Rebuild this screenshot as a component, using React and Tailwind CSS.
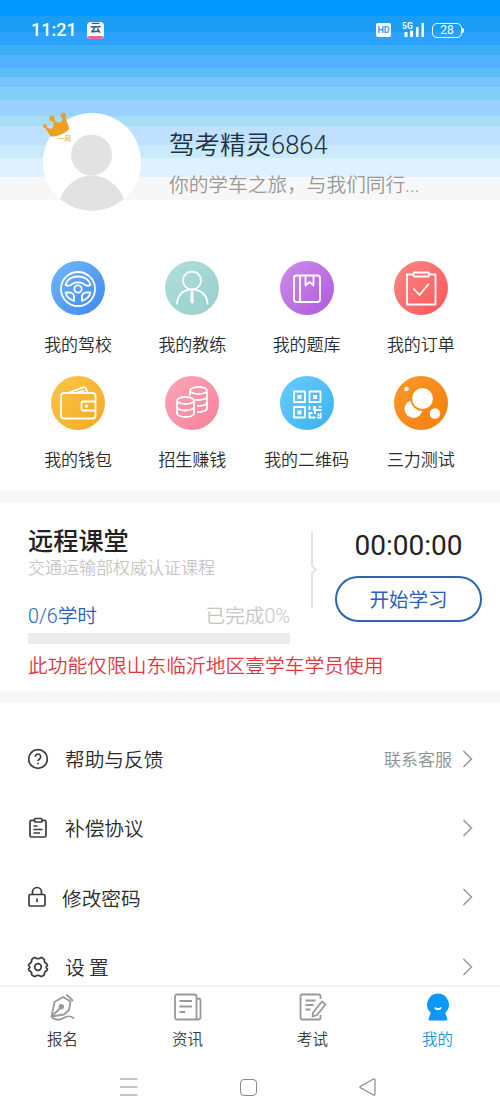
import React from "react";

const bands = [
  "h-[16px] bg-[#0098ff]",
  "h-[16px] bg-[#1b9df4]",
  "h-[13px] bg-[#2ba3ff]",
  "h-[10px] bg-[#3aaef3]",
  "h-[13px] bg-[#52b2ff]",
  "h-[9px] bg-[#5dbcf6]",
  "h-[10px] bg-[#7ac1ff]",
  "h-[13px] bg-[#80cff7]",
  "h-[16px] bg-[#99d1ff]",
  "h-[10px] bg-[#a5ddf6]",
  "h-[19px] bg-[#bfe1ff]",
  "h-[13px] bg-[#c9eaf8]",
  "h-[19px] bg-[#dff1ff]",
  "h-[23px] bg-[#f7f7f7]",
];

const WheelIcon = () => (
  <>
    <circle cx="27" cy="28" r="17" />
    <circle cx="27" cy="28" r="3.700" />
    <path d="M14.500 23.500C16.500 18 21.500 15.500 27 15.500s10.500 2.500 12.500 8c-1.500 1.500-3.500 1.500-5.500.5-3-3.500-11-3.500-14 0-2 1-4 1-5.500-.5z" />
    <path d="M14.500 31.500h5c2 .5 3.500 2 3.500 4v4.500c-4.500-1.500-7.500-4.500-8.500-8.500zM39.500 31.500h-5c-2 .5-3.500 2-3.500 4v4.500c4.500-1.500 7.500-4.500 8.500-8.500z" />
  </>
);

const CoachIcon = () => (
  <>
    <circle cx="27" cy="19.500" r="9" />
    <path d="M12 43.500C12 34 18 28.700 27 28.700S42.500 34 42.500 43.500" />
    <path d="M26 30h2.200l.8 10-1.900 3.500L25.200 40z" fill="white" stroke="none" />
  </>
);

const BookIcon = () => (
  <>
    <rect x="14" y="14.500" width="26" height="26.500" rx="2.500" />
    <path d="M20 14.500V41M25.500 14.500v10l4-3.500 4 3.500v-10" />
  </>
);

const OrderIcon = () => (
  <>
    <path d="M19 13.500h-6v30h28.500v-30h-6" />
    <rect x="19.500" y="11.500" width="15.500" height="4" rx="1" />
    <path d="M19.500 27.500l6 6.500L35 22.500" />
  </>
);

const WalletIcon = () => (
  <>
    <rect x="10" y="17" width="34.500" height="25.500" rx="3" />
    <path d="M18 16.500L32 11.300c1.500-.5 2.300.3 3 1.500l1.500 3.500M25.500 16.500l8-2" />
    <path d="M44.500 25.500H32a1.500 1.500 0 0 0-1.500 1.500v6a1.500 1.500 0 0 0 1.500 1.500h12.500" />
    <circle cx="35.500" cy="30" r="1.700" fill="white" stroke="none" />
  </>
);

const CoinsIcon = () => (
  <>
    <ellipse cx="20.500" cy="24.500" rx="8.500" ry="3.500" />
    <path d="M12 24.500v13c0 2 4 3.500 8.500 3.500s8.500-1.500 8.500-3.500v-13M12 31c0 2 4 3.500 8.500 3.500S29 33 29 31" />
    <ellipse cx="33.500" cy="14.500" rx="8.500" ry="3.500" />
    <path d="M25 14.500v5M42 14.500v18c0 2-4 3.500-10 3.500M42 20.500c0 2-4 3.500-8.500 3.500-1.500 0-2.500-.1-3.500-.4M42 26.500c0 2-4 3.500-10 3.500" />
  </>
);

const QrIcon = () => (
  <>
    <path d="M14 15.500h11v10.500H14zM29.500 15.500h11v10.500h-11zM14 31h11v10.500H14z" />
    <path
      d="M17.500 19h4v4h-4zM33 19h4v4h-4zM17.500 34.500h4v4h-4zM28.500 30h2v4h-2zM33 30h3v3h5.500v2H36v3h-2v-3h-1zM38.500 30h3v1.500h-3zM28.500 36h4v2h-2v2.500h5v2h-7zM37.500 37.500h2v3h-2zM40 36.500h1.500v6H37v-1.500h3z"
      fill="white"
      stroke="none"
    />
  </>
);

const BubblesIcon = () => (
  <g fill="white" stroke="none">
    <circle cx="12.500" cy="13" r="2.300" />
    <circle cx="19.500" cy="33" r="9" />
    <circle cx="28.500" cy="22.500" r="12.300" fill="#f98a12" />
    <circle cx="28.500" cy="22.500" r="10.500" />
    <circle cx="41" cy="37.500" r="5.300" />
  </g>
);

const shortcuts = [
  { label: "我的驾校", bg: "bg-linear-to-br from-[#71b8fb] to-[#4186ee]", Icon: WheelIcon },
  { label: "我的教练", bg: "bg-linear-to-br from-[#b1dedb] to-[#96cfcd]", Icon: CoachIcon },
  { label: "我的题库", bg: "bg-linear-to-br from-[#d08be9] to-[#ad59dc]", Icon: BookIcon },
  { label: "我的订单", bg: "bg-linear-to-br from-[#fc8583] to-[#fa5459]", Icon: OrderIcon },
  { label: "我的钱包", bg: "bg-linear-to-br from-[#fcc649] to-[#f1a91f]", Icon: WalletIcon },
  { label: "招生赚钱", bg: "bg-linear-to-br from-[#fba6b7] to-[#f68099]", Icon: CoinsIcon },
  { label: "我的二维码", bg: "bg-linear-to-br from-[#6acbfc] to-[#36b2f2]", Icon: QrIcon },
  { label: "三力测试", bg: "bg-linear-to-br from-[#fb982b] to-[#f57e04]", Icon: BubblesIcon },
];

const HelpIcon = () => (
  <>
    <circle cx="11" cy="11" r="9.300" />
    <path d="M8.300 8.800a2.700 2.700 0 1 1 4.300 2.100c-1 .8-1.600 1-1.600 2.200M11 14.800v1.500" />
  </>
);

const AgreementIcon = () => (
  <>
    <path d="M7 3.300H4.500A1.500 1.500 0 0 0 3 4.800v13.700A1.500 1.500 0 0 0 4.500 20h13a1.500 1.500 0 0 0 1.500-1.500V4.800a1.500 1.500 0 0 0-1.500-1.500H15" />
    <rect x="7.500" y="1.500" width="7.500" height="3.500" rx="1" />
    <path d="M6.500 9h4M6.500 12.500h9M6.500 16H13" />
  </>
);

const LockIcon = () => (
  <>
    <rect x="2" y="8.500" width="16" height="11.500" rx="1.500" />
    <path d="M5.500 8.500V6a4.500 4.500 0 0 1 9 0v2.500M10 12.500v3.500" />
  </>
);

const GearIcon = () => (
  <>
    <path d="M6.900 1.700h1.600c.8 1.300 4.200 1.300 5 0h1.600l2.200 1.900c-.3 2.400.7 3.700 2.700 4.400l.5 1.500c-1.800 1.200-1.800 2.300 0 3.500l-.5 1.500c-2 .7-3 2-2.700 4.400l-2.200 1.400h-1.600c-.8-1.300-4.200-1.300-5 0H6.900l-2.200-1.400c.3-2.400-.7-3.700-2.700-4.400L1.500 13c1.800-1.200 1.800-2.300 0-3.500L2 8c2-.7 3-2 2.700-4.400z" />
    <circle cx="11" cy="11" r="3.300" />
  </>
);

const menu = [
  { label: "帮助与反馈", extra: "联系客服", Icon: HelpIcon, gap: "ml-4" },
  { label: "补偿协议", Icon: AgreementIcon, gap: "ml-4" },
  { label: "修改密码", Icon: LockIcon, gap: "ml-[13px]" },
  { label: "设 置", Icon: GearIcon, gap: "ml-4" },
];

const PenIcon = () => (
  <>
    <path d="M2.500 23.500L5.500 9l8.500-5 7.500 4.500-1.500 8.500-5 4.500z" />
    <path d="M2.500 23.500l9-8.500M17.500 1.500l6.500 6.500M2.500 24c4 3.500 8 3.500 12 1s6.500-2.500 10.500.5" />
    <circle cx="12.300" cy="13.800" r="1.800" fill="currentColor" />
  </>
);

const NewsIcon = () => (
  <>
    <rect x="1" y="1.500" width="21.500" height="25" rx="2" />
    <path d="M22.500 5.500h1.500a2.500 2.500 0 0 1 2.500 2.500v16a2.500 2.500 0 0 1-2.500 2.500h-3M5.500 8H18M5.500 13.500H18M5.500 19H11" />
  </>
);

const ExamIcon = () => (
  <>
    <path d="M21.500 6V3A1.500 1.500 0 0 0 20 1.500H3A1.500 1.500 0 0 0 1.500 3v22A1.500 1.500 0 0 0 3 26.500h17a1.500 1.500 0 0 0 1.500-1.500v-3" />
    <path d="M6.500 7.500h10M6.500 12h8M6.500 16.500h5M14 19.500l9-11 3.500 3L18 22l-4.500 1.500z" />
  </>
);

const MineIcon = () => (
  <>
    <path
      d="M14 .5a11 11 0 0 0-7.500 18.900c.3 1.600-1.200 4-1.700 6.100-.3 1.300.2 2 1.300 2h15.800c1.100 0 1.600-.7 1.300-2-.5-2.100-2-4.500-1.700-6.100A11 11 0 0 0 14 .5z"
      fill="currentColor"
      stroke="none"
    />
    <path d="M10.800 14.500c1.500 2.300 4.900 2.300 6.400 0" stroke="white" />
  </>
);

const tabs = [
  { label: "报名", Icon: PenIcon },
  { label: "资讯", Icon: NewsIcon },
  { label: "考试", Icon: ExamIcon },
  { label: "我的", Icon: MineIcon, active: true },
];

// Digits are set in Roboto, Chinese text stays in the page font
const Num = ({ children }) => <span className="font-['Roboto',sans-serif]">{children}</span>;

function StatusBar() {
  return (
    <div className="flex h-[60px] items-center pl-[31px] pr-[36px] font-['Roboto','Noto_Sans_CJK_SC',sans-serif] text-white">
      <span className="w-[45px] text-[18px] leading-5 font-medium">11:21</span>
      <div className="ml-[11px] flex h-[17px] w-[17px] flex-col items-center overflow-hidden rounded-[4px] bg-white">
        <span className="h-[14px] text-[11px] leading-[14px] font-bold text-[#2b5ca8]">云</span>
        <span className="h-[3px] w-full rounded-t-full bg-[#e8668c]" />
      </div>
      <span className="ml-auto flex h-[14px] w-[15px] items-center justify-center rounded-[2px] bg-white text-[9px] leading-none font-bold text-[#329ff6]">
        HD
      </span>
      <svg className="ml-[10px]" width="24" height="18" viewBox="0 0 24 18" fill="white">
        <text x="1" y="8" fontSize="8.500" fontWeight="700">
          5G
        </text>
        <path d="M3.500 11h3v5h-3zM9 9.500h3V16H9zM15 6h2.500v10H15zM20.500 2H23v14h-2.500z" />
      </svg>
      <span className="ml-[7px] flex h-[15px] w-[30px] items-center justify-center rounded-[5px] border border-white text-[12px] leading-none font-normal">
        28
      </span>
      <span className="h-[5px] w-[2px] rounded-r bg-white" />
    </div>
  );
}

function Profile() {
  return (
    <div className="flex pt-[53px] pl-[43px]">
      <div className="relative h-[98px] w-[98px] shrink-0">
        <svg width="98" height="98" viewBox="0 0 98 98">
          <circle cx="49" cy="49" r="49" fill="white" />
          <circle cx="48.500" cy="42" r="20.500" fill="#e2e2e2" />
          <path d="M17 86c5-13 17-23.500 31.500-23.500S76 73 81 86a49 49 0 0 1-64 0z" fill="#e2e2e2" />
        </svg>
        <svg className="absolute -top-px -left-px" width="32" height="30" viewBox="0 0 32 30">
          <path
            d="M9 23.500L3 14c2.500 3.500 6 4.500 8 2.500 2-2.200 1.500-6-.5-9.500 3 4 6 5.500 8.500 4s3-4.500 2.500-8.500L26.500 16c-1 3.500-12.500 8.500-17.500 7.500z"
            fill="#eda01f"
            stroke="#eda01f"
            strokeWidth="1.500"
            strokeLinejoin="round"
          />
          <g fill="#eda01f">
            <circle cx="3" cy="14" r="2" />
            <circle cx="10" cy="6.500" r="2.700" />
            <circle cx="21.500" cy="3.500" r="2.700" />
          </g>
          <text x="16" y="28.500" fontSize="6.500" fontWeight="400" fill="#eda01f">
            一网
          </text>
        </svg>
      </div>
      <div className="ml-[28px] pt-[14px]">
        <div className="h-8 text-[25.500px] leading-8 text-[#222f40]">
          驾考精灵<Num>6864</Num>
        </div>
        <div className="mt-[11px] text-[19.700px] leading-7 text-[#999]">
          你的学车之旅，与我们同行<Num>...</Num>
        </div>
      </div>
    </div>
  );
}

function Classroom() {
  return (
    <section className="h-[188px] bg-white pl-[28px]">
      <div className="flex">
        <div className="w-[262px] pt-[20px]">
          <h2 className="text-[25.200px] leading-8 font-medium text-[#222]">远程课堂</h2>
          <p className="text-[17px] leading-6 text-[#c6c6c6]">交通运输部权威认证课程</p>
          <div className="mt-[22px] flex h-7 justify-between text-[19.700px] leading-7">
            <span className="text-[#2c5fb8]">
              <Num>0/6</Num>学时
            </span>
            <span className="text-[#c6c6c6]">
              已完成<Num>0%</Num>
            </span>
          </div>
          <div className="mt-[4px] h-[11px] bg-[#ececec]" />
        </div>
        <svg className="mt-[29px] ml-[20px]" width="10" height="77" viewBox="0 0 10 77" fill="none" stroke="#dcdcdc" strokeWidth="1.500">
          <path d="M2 0v34l4 3.500-4 3.500v35" />
        </svg>
        <div className="ml-[15px] flex flex-col items-center pt-[22px]">
          <span className="h-9 text-[28px] leading-9 font-normal text-[#222]">
            <Num>00:00:00</Num>
          </span>
          <button className="mt-[15px] h-[46px] w-[147px] rounded-full border-2 border-[#2c66b0] text-[19.500px] leading-7 font-normal text-[#2c5fb8]">
            开始学习
          </button>
        </div>
      </div>
      <p className="mt-[7px] text-[19.750px] leading-7 text-[#e0393f]">此功能仅限山东临沂地区壹学车学员使用</p>
    </section>
  );
}

export default function App() {
  return (
    <div className="relative flex h-[1118px] w-[500px] flex-col overflow-hidden bg-white font-['Noto_Sans_CJK_SC',sans-serif] font-[350]">
      {/* Striped sky behind the header */}
      <div className="absolute inset-x-0 top-0">
        {bands.map((band) => (
          <div key={band} className={band} />
        ))}
      </div>

      <main className="relative h-[985px] shrink-0 overflow-hidden">
        <header className="h-[261px]">
          <StatusBar />
          <Profile />
        </header>

        {/* Shortcuts */}
        <section className="grid h-[229px] grid-cols-4 content-start gap-y-[22px] pr-[22px] pl-[21px]">
          {shortcuts.map(({ label, bg, Icon }) => (
            <div key={label} className="flex flex-col items-center">
              <div className={`h-[54px] w-[54px] rounded-full ${bg}`}>
                <svg width="54" height="54" viewBox="0 0 54 54" fill="none" stroke="white" strokeWidth="1.800" strokeLinejoin="round">
                  <Icon />
                </svg>
              </div>
              <span className="mt-[18px] text-[17px] leading-[21px] whitespace-nowrap text-[#2b2b2b]">{label}</span>
            </div>
          ))}
        </section>

        <div className="h-[13px] bg-[#f7f7f7]" />
        <Classroom />
        <div className="h-[12px] bg-[#f7f7f7]" />

        {/* Menu */}
        <section className="pt-[21px] pr-[27px] pl-[27px]">
          {menu.map(({ label, extra, Icon, gap }) => (
            <div key={label} className="flex h-[69.300px] items-center">
              <svg width="22" height="22" viewBox="0 0 22 22" fill="none" stroke="#3c3c3c" strokeWidth="1.700" strokeLinejoin="round">
                <Icon />
              </svg>
              <span className={`pt-px text-[19.700px] leading-7 text-[#2b2b2b] ${gap}`}>{label}</span>
              <span className="ml-auto text-[17px] leading-7 text-[#8e8e8e]">{extra}</span>
              <svg className="ml-[10px]" width="11" height="18" viewBox="0 0 11 18" fill="none" stroke="#999" strokeWidth="1.500">
                <path d="M1.500 1L9.500 9l-8 8" />
              </svg>
            </div>
          ))}
        </section>
      </main>

      {/* Tab bar */}
      <nav className="grid h-[71px] shrink-0 grid-cols-4 border-t-2 border-[#f2f2f2] bg-white pt-[6px]">
        {tabs.map(({ label, Icon, active }) => (
          <div key={label} className={`flex flex-col items-center ${active ? "text-[#0a98fa]" : "text-[#999]"}`}>
            <svg width="28" height="28" viewBox="0 0 28 28" fill="none" stroke="currentColor" strokeWidth="1.800" strokeLinejoin="round">
              <Icon />
            </svg>
            <span className={`mt-[7px] text-[15.500px] leading-5 ${active ? "text-[#1b93de]" : "text-[#3a3a3a]"}`}>{label}</span>
          </div>
        ))}
      </nav>

      {/* System navigation */}
      <div className="flex h-[62px] shrink-0 items-center justify-between pr-[124px] pl-[120px]">
        <svg width="18" height="18" viewBox="0 0 18 18" stroke="#8a8a8a" strokeWidth="1.200">
          <path d="M0 1h17.500M0 9h17.500M0 17h17.500" />
        </svg>
        <span className="h-[17px] w-[17px] rounded-[4px] border border-[#8a8a8a]" />
        <svg width="17" height="18" viewBox="0 0 17 18" fill="none" stroke="#8a8a8a" strokeWidth="1.200" strokeLinejoin="round">
          <path d="M1.500 8.200L14.500 1c1-.5 1.500 0 1.500 1v14c0 1-.5 1.500-1.500 1L1.500 9.800c-.9-.5-.9-1.100 0-1.600z" />
        </svg>
      </div>
    </div>
  );
}
